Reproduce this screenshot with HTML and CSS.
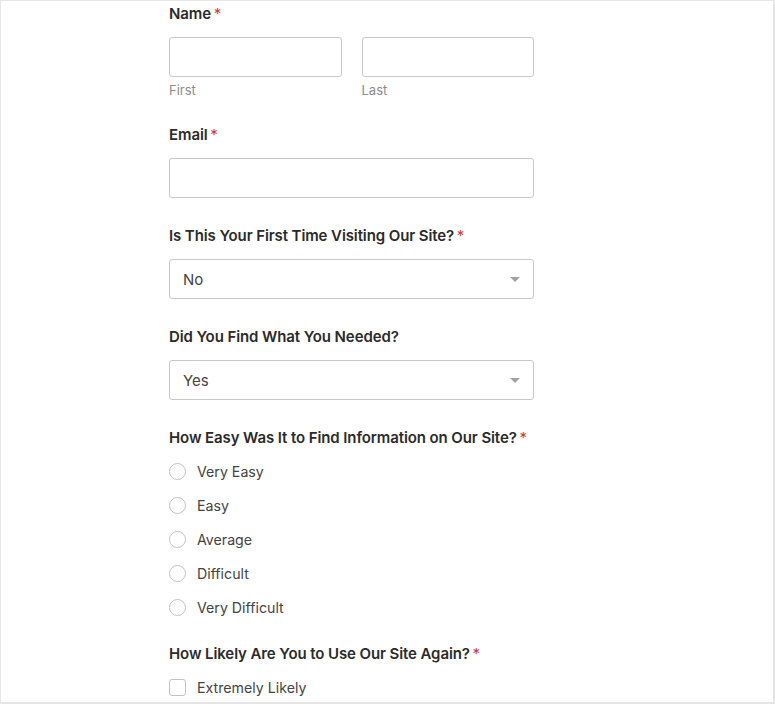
FILE: index.html
```html
<!DOCTYPE html>
<html lang="en">

<head>
    <meta charset="UTF-8">
    <meta name="viewport" content="width=device-width, initial-scale=1.0">
    <title>Survey</title>
    <link rel="stylesheet" href="styles.css">
</head>

<body>

    <div class="frame">
        <form class="survey">

            <div class="field">
                <label class="field-label">Name <span class="req">*</span></label>
                <div class="row">
                    <div class="col">
                        <input type="text" class="text-input">
                        <span class="sublabel">First</span>
                    </div>
                    <div class="col">
                        <input type="text" class="text-input">
                        <span class="sublabel">Last</span>
                    </div>
                </div>
            </div>

            <div class="field">
                <label class="field-label">Email <span class="req">*</span></label>
                <input type="email" class="text-input">
            </div>

            <div class="field">
                <label class="field-label">Is This Your First Time Visiting Our Site? <span class="req">*</span></label>
                <div class="select">
                    <span>No</span>
                    <span class="arrow"></span>
                </div>
            </div>

            <div class="field">
                <label class="field-label">Did You Find What You Needed?</label>
                <div class="select">
                    <span>Yes</span>
                    <span class="arrow"></span>
                </div>
            </div>

            <div class="field">
                <label class="field-label">How Easy Was It to Find Information on Our Site? <span class="req">*</span></label>
                <ul class="choices">
                    <li><span class="radio"></span>Very Easy</li>
                    <li><span class="radio"></span>Easy</li>
                    <li><span class="radio"></span>Average</li>
                    <li><span class="radio"></span>Difficult</li>
                    <li><span class="radio"></span>Very Difficult</li>
                </ul>
            </div>

            <div class="field">
                <label class="field-label">How Likely Are You to Use Our Site Again? <span class="req">*</span></label>
                <ul class="choices">
                    <li><span class="check"></span>Extremely Likely</li>
                </ul>
            </div>

        </form>
    </div>

</body>

</html>
```

FILE: styles.css
```css
html,
body {
    margin: 0;
    padding: 0;
    background-color: #fff;
}

body {
    font-family: Inter, "Noto Sans", sans-serif;
    color: #2b2b2b;
}

.frame {
    box-sizing: border-box;
    height: 704px;
    overflow: hidden;
    border: 1px solid #e6e6e6;
    border-right-width: 2px;
    border-bottom-width: 2px;
    padding: 3px 0 0 168px;
}

.survey {
    width: 365px;
}

.field {
    margin-bottom: 28px;
}

.field:first-child {
    margin-bottom: 27px;
}

.field:nth-child(5) {
    margin-bottom: 25px;
}

.field-label {
    display: block;
    font-size: 15px;
    line-height: 20px;
    font-weight: 600;
    color: #2b2b2b;
    margin-bottom: 13px;
    letter-spacing: -0.1px;
}

.req {
    color: #d63637;
    font-weight: 400;
    margin-left: -1px;
}

.row {
    display: flex;
    gap: 20px;
}

.col {
    flex: 1;
}

.text-input,
.select {
    box-sizing: border-box;
    display: block;
    width: 100%;
    height: 40px;
    border: 1px solid #c9c9c9;
    border-radius: 3px;
    background-color: #fff;
    margin: 0;
}

.sublabel {
    display: block;
    font-size: 13px;
    line-height: 16px;
    margin-top: 5px;
    color: #8c8c8c;
}

.select {
    display: flex;
    align-items: center;
    justify-content: space-between;
    padding: 0 13px;
    font-size: 15px;
    color: #444;
}

.arrow {
    width: 0;
    height: 0;
    border-left: 5px solid transparent;
    border-right: 5px solid transparent;
    border-top: 5px solid #a3a3a3;
}

.choices {
    list-style: none;
    margin: -2px 0 0;
    padding: 0;
}

.choices li {
    display: flex;
    align-items: center;
    height: 24px;
    margin-bottom: 10px;
    font-size: 14.2px;
    color: #444;
}

.radio,
.check {
    box-sizing: border-box;
    width: 17px;
    height: 17px;
    border: 1px solid #c2c2c2;
    margin-right: 11px;
    background-color: #fff;
}

.radio {
    border-radius: 50%;
}

.check {
    border-radius: 3px;
}
```
